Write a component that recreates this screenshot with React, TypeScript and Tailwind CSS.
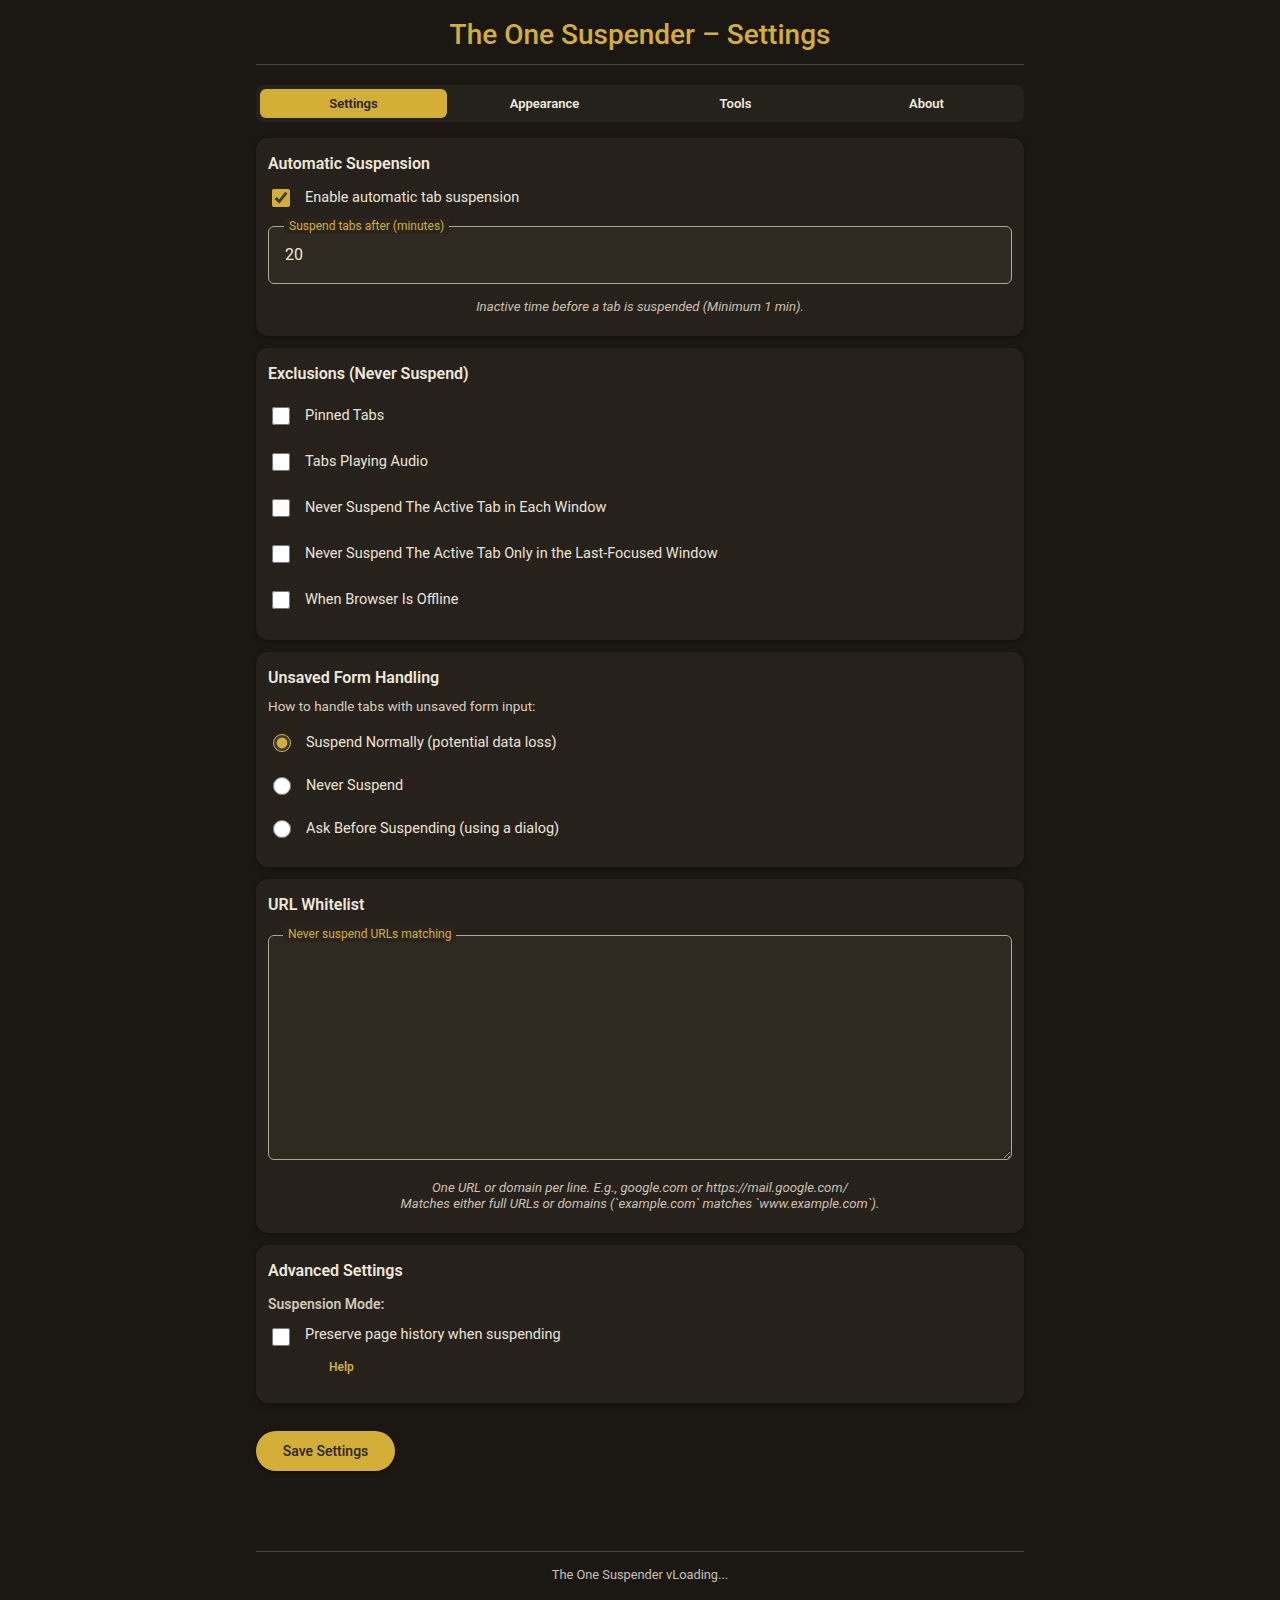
import React from "react";

function Card({ title, className, children }: { title: string; className?: string; children: React.ReactNode }) {
  return (
    <section className={`rounded-xl bg-[#26211b] px-3 pt-[14px] shadow-[0_2px_6px_rgba(0,0,0,0.35)] ${className ?? ""}`}>
      <h2 className="text-base leading-6 font-semibold text-[#efe8da]">{title}</h2>
      {children}
    </section>
  );
}

function Check({ label, checked, className }: { label: string; checked?: boolean; className?: string }) {
  return (
    <label className={`flex items-center gap-[15px] text-[14.5px] text-[#ebe4d6] ${className ?? ""}`}>
      <input
        type="checkbox"
        defaultChecked={checked}
        className="ml-1 h-[18px] w-[18px] accent-[#d4af37]"
      />
      <span className="leading-5">{label}</span>
    </label>
  );
}

function Radio({ label, checked }: { label: string; checked?: boolean }) {
  return (
    <label className="flex h-[43px] items-center gap-[15px] text-[14.5px] text-[#ebe4d6]">
      <input
        type="radio"
        name="form"
        defaultChecked={checked}
        className="ml-[5px] h-[18px] w-[18px] accent-[#d4af37]"
      />
      <span className="leading-5">{label}</span>
    </label>
  );
}

export default function App() {
  const tabs = ["Settings", "Appearance", "Tools", "About"];
  const exclusions = [
    "Pinned Tabs",
    "Tabs Playing Audio",
    "Never Suspend The Active Tab in Each Window",
    "Never Suspend The Active Tab Only in the Last-Focused Window",
    "When Browser Is Offline",
  ];
  return (
    <div className="min-h-screen bg-[#1b1814] font-[Roboto,sans-serif] text-[#ebe4d6]">
      <div className="mx-auto w-[768px] pt-[18px]">
        <h1 className="border-b border-[#4b443a] pb-3 text-center text-[28px] leading-[34px] font-medium text-[#d4af37]">
          The One Suspender – Settings
        </h1>

        <nav className="mt-[20px] grid grid-cols-4 gap-1 rounded-lg bg-[#25211b] p-1">
          {tabs.map((t, i) => (
            <button
              key={t}
              className={`h-[29px] rounded-md text-[13px] font-semibold ${
                i === 0 ? "bg-[#d4af37] text-[#2a2418]" : "text-[#f1ebdf]"
              }`}
            >
              {t}
            </button>
          ))}
        </nav>

        <div className="mt-4 flex flex-col gap-3">
          <Card title="Automatic Suspension" className="pb-[21px]">
            <Check label="Enable automatic tab suspension" checked className="mt-[12px]" />
            <div className="relative mt-[18px] flex h-[58px] items-center rounded-md border border-[#b0a692] bg-[#2e2a21] px-4">
              <span className="absolute -top-[9px] left-[15px] bg-[#29251e] px-[5px] text-xs leading-4 text-[#d4af37]">
                Suspend tabs after (minutes)
              </span>
              <span className="text-base text-[#efe8dc]">20</span>
            </div>
            <p className="mt-[15px] text-center text-[13.2px] leading-4 italic text-[#cbc2b1]">
              Inactive time before a tab is suspended (Minimum 1 min).
            </p>
          </Card>

          <Card title="Exclusions (Never Suspend)" className="pb-[17px]">
            <div className="mt-[7px]">
              {exclusions.map((e) => (
                <Check key={e} label={e} className="h-[46px]" />
              ))}
            </div>
          </Card>

          <Card title="Unsaved Form Handling" className="pb-[17px]">
            <p className="mt-[7px] text-[13.5px] leading-[18px] text-[#d6cebe]">How to handle tabs with unsaved form input:</p>
            <div className="mt-[6px]">
              <Radio label="Suspend Normally (potential data loss)" checked />
              <Radio label="Never Suspend" />
              <Radio label="Ask Before Suspending (using a dialog)" />
            </div>
          </Card>

          <Card title="URL Whitelist" className="pb-[21px]">
            <div className="relative mt-[18px]">
              <span className="absolute -top-[9px] left-[15px] z-10 bg-[#29251e] px-[5px] text-xs leading-4 text-[#d4af37]">
                Never suspend URLs matching
              </span>
              <textarea className="block h-[225px] w-full rounded-md border border-[#b0a692] bg-[#2e2a21] px-4 py-3 text-sm text-[#efe8dc] outline-none" />
            </div>
            <p className="mt-[20px] text-center text-[13.2px] leading-4 italic text-[#cbc2b1]">
              One URL or domain per line. E.g., google.com or https://mail.google.com/
              <br />
              Matches either full URLs or domains (`example.com` matches `www.example.com`).
            </p>
          </Card>

          <Card title="Advanced Settings" className="pb-7">
            <p className="mt-[12px] text-[14px] leading-[18px] font-semibold text-[#d3cab9]">Suspension Mode:</p>
            <Check label="Preserve page history when suspending" className="mt-[12px] h-5 items-start [&>input]:mt-[3px]" />
            <p className="mt-[14px] ml-[61px] text-xs leading-4 font-semibold text-[#d4af37]">Help</p>
          </Card>
        </div>

        <button className="mt-[28px] h-10 w-[139px] rounded-full bg-[#d4af37] text-sm font-medium text-[#2a2418] shadow-[0_2px_4px_rgba(0,0,0,0.4)]">
          Save Settings
        </button>

        <footer className="mt-20 border-t border-[#4b443a] pt-[15px] pb-6 text-center text-[12.8px] leading-4 text-[#c9c0b0]">
          The One Suspender vLoading...
        </footer>
      </div>
    </div>
  );
}
